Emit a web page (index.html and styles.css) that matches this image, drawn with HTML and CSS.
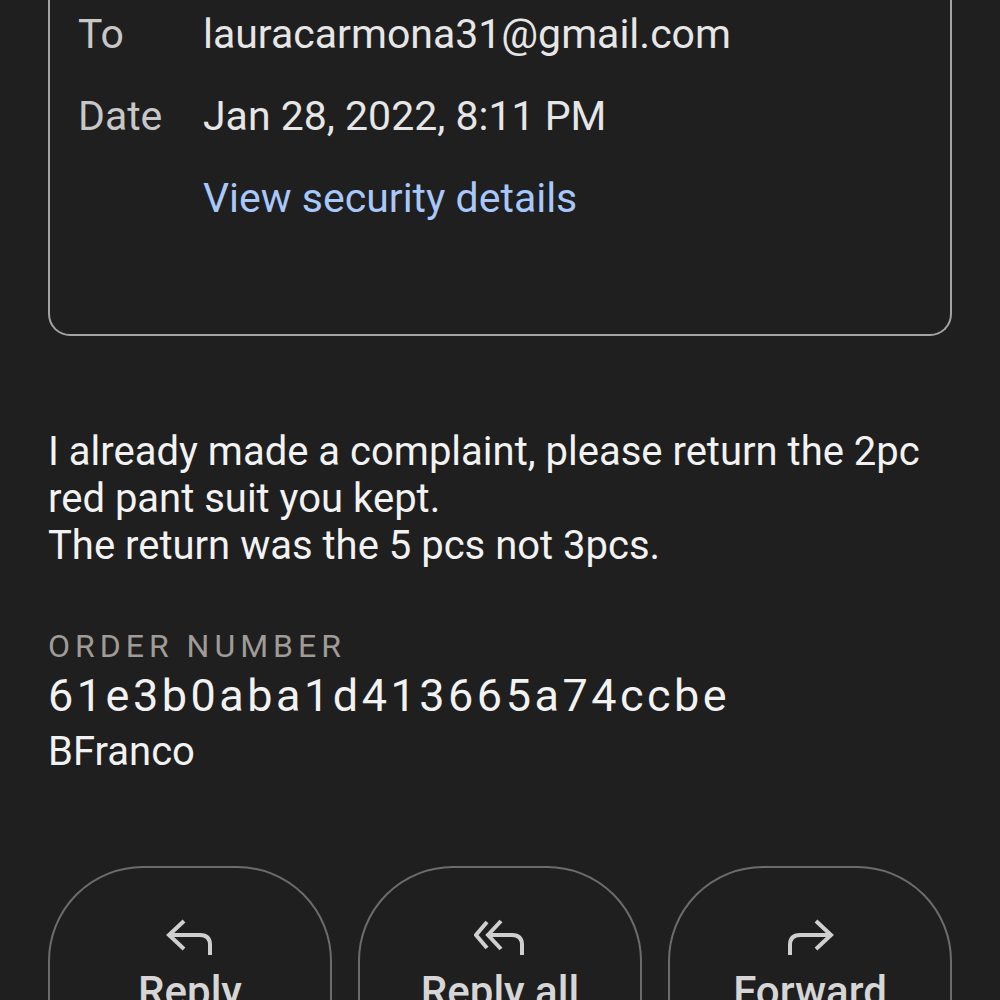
FILE: index.html
```html
<!DOCTYPE html>
<html lang="en">
<head>
	<meta charset="UTF-8">
	<title>Message</title>
	<link rel="stylesheet" href="styles.css">
</head>
<body>
	<div id="page">
		<div id="details">
			<div class="row">
				<span class="label">To</span>
				<span class="value">lauracarmona31@gmail.com</span>
			</div>
			<div class="row">
				<span class="label">Date</span>
				<span class="value">Jan 28, 2022, 8:11 PM</span>
			</div>
			<div class="row">
				<span class="label"></span>
				<a href="javascript:;" class="link">View security details</a>
			</div>
		</div>

		<p id="message">I already made a complaint, please return the 2pc red pant suit you kept.<br>The return was the 5 pcs not 3pcs.</p>

		<div id="order">
			<div class="order-label">ORDER NUMBER</div>
			<div class="order-number">61e3b0aba1d413665a74ccbe</div>
			<div class="order-name">BFranco</div>
		</div>

		<div id="actions">
			<a href="javascript:;" class="action">
				<svg width="48" height="40" viewBox="0 0 48 40">
					<path d="M18 4 L3 18 L18 32 M3 18 H34 Q44 18 44 28 V38" />
				</svg>
				<span>Reply</span>
			</a>
			<a href="javascript:;" class="action">
				<svg width="52" height="40" viewBox="0 0 52 40">
					<path d="M13 5 L2 18 L13 31" />
					<path d="M27 4 L14 18 L27 32 M14 18 H38 Q48 18 48 28 V38" />
				</svg>
				<span>Reply all</span>
			</a>
			<a href="javascript:;" class="action">
				<svg width="48" height="40" viewBox="0 0 48 40">
					<path d="M30 4 L45 18 L30 32 M45 18 H14 Q4 18 4 28 V38" />
				</svg>
				<span>Forward</span>
			</a>
		</div>
	</div>
</body>
</html>
```

FILE: styles.css
```css
* {
    margin: 0;
    padding: 0;
    text-decoration: none;
}

html,
body {
    height: 100%;
    overflow: hidden;
}

body {
    background: #1f1f1f;
    font-family: Roboto, "Noto Sans", sans-serif;
    color: #e6e6e6;
}

#page {
    padding: 0 48px;
}

#details {
    margin-top: -7px;
    padding: 0 28px 95px 28px;
    border: 2px solid #a3a3a3;
    border-top: none;
    border-radius: 0 0 22px 22px;
}

.row {
    display: grid;
    grid-template-columns: 125px 1fr;
    font-size: 41px;
    line-height: 82px;
}

.label {
    color: #c7c7c7;
}

.value {
    color: #e6e6e6;
}

.link {
    color: #a8c7fa;
}

#message {
    margin-top: 92px;
    font-size: 40px;
    line-height: 47px;
    color: #f2f2f2;
}

#order {
    margin-top: 55px;
}

.order-label {
    font-size: 32px;
    line-height: 44px;
    letter-spacing: 5px;
    color: #9f9b96;
}

.order-number {
    margin-top: 3px;
    font-size: 45px;
    line-height: 50px;
    letter-spacing: 3.5px;
    color: #f2f2f2;
}

.order-name {
    margin-top: 7px;
    font-size: 40px;
    line-height: 48px;
    color: #f2f2f2;
}

#actions {
    display: flex;
    gap: 26px;
    margin-top: 90px;
}

.action {
    flex: 1;
    display: flex;
    flex-direction: column;
    align-items: center;
    height: 220px;
    padding-top: 49px;
    border: 2px solid #6c6c6c;
    border-radius: 95px;
    color: #d6d6d6;
    font-size: 42px;
    font-weight: 500;
    line-height: 50px;
}

.action svg {
    display: block;
    margin-bottom: 10px;
}

.action path {
    fill: none;
    stroke: #cfcfcf;
    stroke-width: 4;
}
```
